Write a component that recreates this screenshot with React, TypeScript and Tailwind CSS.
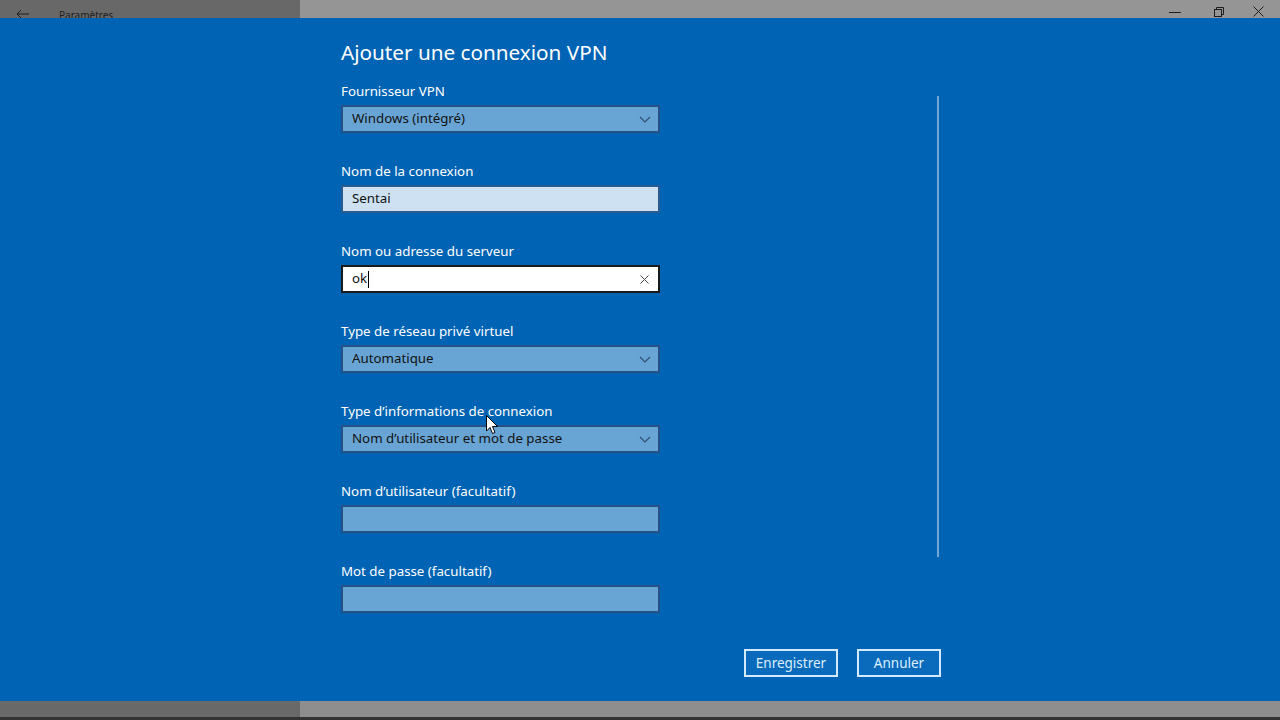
import React from "react";

const font = { fontFamily: '"Noto Sans", "Open Sans", sans-serif' };

const Chevron = () => (
  <svg width="12" height="7" viewBox="0 0 12 7" className="shrink-0">
    <path d="M1 1 L6 6 L11 1" fill="none" stroke="#2f4e6e" strokeWidth="1.1" />
  </svg>
);

const Label = ({ children }: { children: React.ReactNode }) => (
  <div className="h-[20px] text-[13.3px] leading-[20px] text-white">{children}</div>
);

const Select = ({ value }: { value: string }) => (
  <div className="mt-[4px] flex h-[28px] items-center justify-between border-2 border-[#245287] bg-[#68a5d5] pl-[9px] pr-[7px] text-[13.3px] text-[#111]">
    <span>{value}</span>
    <Chevron />
  </div>
);

const Field = ({ value, tone }: { value?: string; tone: "light" | "empty" }) => (
  <div
    className={
      tone === "light"
        ? "mt-[4px] flex h-[28px] items-center border-2 border-[#2a5a8e] bg-[#cde1f3] pl-[9px] text-[13.3px] text-[#111]"
        : "mt-[4px] flex h-[28px] items-center border-2 border-[#245287] bg-[#68a5d5] pl-[9px] text-[13.3px] text-[#111]"
    }
  >
    {value}
  </div>
);

const Group = ({ children, first }: { children: React.ReactNode; first?: boolean }) => (
  <div className={first ? "mt-[14px]" : "mt-[28px]"}>{children}</div>
);

export default function App() {
  return (
    <div className="flex h-[720px] w-[1280px] flex-col overflow-hidden" style={font}>
      {/* title bar */}
      <div className="flex h-[18px] shrink-0">
        <div className="flex w-[300px] items-center bg-[#686868]">
          <svg width="14" height="10" viewBox="0 0 14 10" className="ml-[16px] mt-[10px]">
            <path d="M13 5 H1 M5 1 L1 5 L5 9" fill="none" stroke="#1c1c1c" strokeWidth="1" />
          </svg>
          <span className="ml-[29px] mt-[12px] text-[10px] leading-[14px] text-[#1c1c1c]">Paramètres</span>
        </div>
        <div className="flex flex-1 items-end justify-end bg-[#959595] pb-[1px]">
          <div className="flex w-[46px] justify-center">
            <svg width="12" height="10" viewBox="0 0 12 10">
              <path d="M0 5.5 H12" stroke="#1c1c1c" strokeWidth="1" />
            </svg>
          </div>
          <div className="flex w-[42px] justify-center">
            <svg width="10" height="10" viewBox="0 0 10 10">
              <rect x="0.5" y="2.5" width="7" height="7" fill="none" stroke="#1c1c1c" />
              <path d="M2.5 2.5 V0.5 H9.5 V7.5 H7.5" fill="none" stroke="#1c1c1c" />
            </svg>
          </div>
          <div className="flex w-[40px] justify-center pr-[4px]">
            <svg width="11" height="11" viewBox="0 0 11 11">
              <path d="M0.5 0.5 L10.5 10.5 M10.5 0.5 L0.5 10.5" stroke="#1c1c1c" strokeWidth="1" />
            </svg>
          </div>
        </div>
      </div>

      {/* main blue panel */}
      <div className="relative flex flex-1 flex-col bg-[#0063b3]">
        <div className="flex">
          <div className="ml-[341px] w-[319px]">
            <div className="mt-[20px] h-[29px] text-[20.7px] leading-[29px] text-white">
              Ajouter une connexion VPN
            </div>

            <Group first>
              <Label>Fournisseur VPN</Label>
              <Select value="Windows (intégré)" />
            </Group>

            <Group>
              <Label>Nom de la connexion</Label>
              <Field value="Sentai" tone="light" />
            </Group>

            <Group>
              <Label>Nom ou adresse du serveur</Label>
              <div className="mt-[4px] flex h-[28px] items-center justify-between border-2 border-[#1a1a1a] bg-white pl-[9px] pr-[9px] text-[13.3px] text-[#111]">
                <span className="flex items-center">
                  ok
                  <span className="ml-[1px] inline-block h-[17px] w-[1px] bg-black" />
                </span>
                <svg width="9" height="9" viewBox="0 0 9 9">
                  <path d="M0.5 0.5 L8.5 8.5 M8.5 0.5 L0.5 8.5" stroke="#444" strokeWidth="1" />
                </svg>
              </div>
            </Group>

            <Group>
              <Label>Type de réseau privé virtuel</Label>
              <Select value="Automatique" />
            </Group>

            <Group>
              <Label>Type d’informations de connexion</Label>
              <Select value="Nom d’utilisateur et mot de passe" />
            </Group>

            <Group>
              <Label>Nom d’utilisateur (facultatif)</Label>
              <Field tone="empty" />
            </Group>

            <Group>
              <Label>Mot de passe (facultatif)</Label>
              <Field tone="empty" />
            </Group>
          </div>

          {/* scroll indicator */}
          <div className="ml-[277px] mt-[78px] h-[461px] w-[2px] bg-[#6fa6d8]" />
        </div>

        <div className="mt-[36px] flex w-[941px] justify-end gap-[19px]">
          <button className="h-[28px] w-[94px] border-2 border-[#d2eaff] bg-[#0a6bbd] text-[13.5px] text-[#dcefff]">
            Enregistrer
          </button>
          <button className="h-[28px] w-[84px] border-2 border-[#d2eaff] bg-[#0a6bbd] text-[13.5px] text-[#dcefff]">
            Annuler
          </button>
        </div>

        {/* mouse pointer */}
        <svg
          width="13"
          height="20"
          viewBox="0 0 13 20"
          className="absolute left-[486px] top-[397px]"
        >
          <path
            d="M0.5 0.5 L0.5 16 L4 12.5 L6.5 18.5 L9 17.5 L6.5 11.5 L11.5 11.5 Z"
            fill="#fff"
            stroke="#000"
            strokeWidth="1"
          />
        </svg>
      </div>

      {/* bottom bar */}
      <div className="flex h-[16px] shrink-0">
        <div className="w-[300px] bg-[#696969]" />
        <div className="flex-1 bg-[#8e8e8e]" />
      </div>
      <div className="h-[3px] shrink-0 bg-[#333]" />
    </div>
  );
}
